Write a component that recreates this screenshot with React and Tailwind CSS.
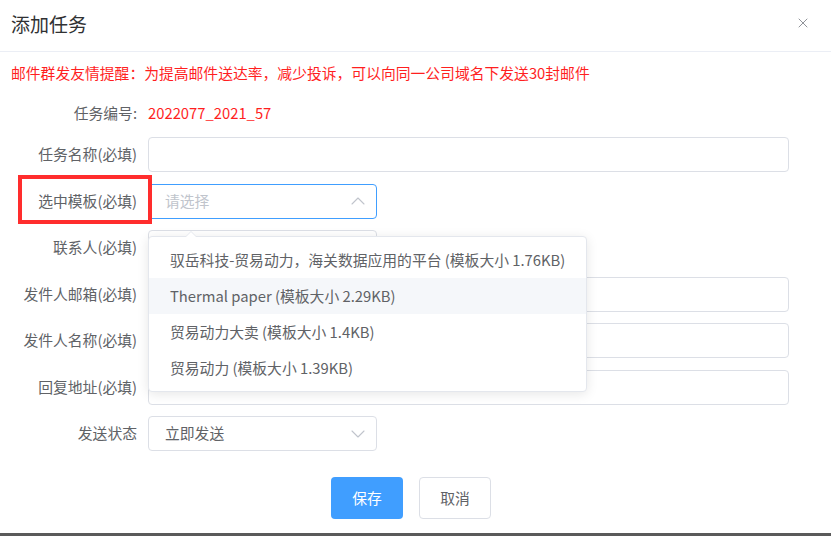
import { ChevronDown, ChevronUp, X } from 'lucide-react'

const FONT = { fontFamily: '"Microsoft YaHei", "Noto Sans CJK SC", "Noto Sans", sans-serif' }

const OPTIONS = [
  '驭岳科技-贸易动力，海关数据应用的平台 (模板大小 1.76KB)',
  'Thermal paper (模板大小 2.29KB)',
  '贸易动力大卖 (模板大小 1.4KB)',
  '贸易动力 (模板大小 1.39KB)',
]

function Row({ label, children }) {
  return (
    <div className="flex h-[35px] items-center">
      <label className="w-[148px] shrink-0 pr-[11px] text-right text-[14.8px] text-[#606266]">{label}</label>
      {children}
    </div>
  )
}

function TextInput() {
  return <div className="h-[35px] w-[641px] rounded-[4px] border border-[#dcdfe6] bg-white" />
}

function Select({ value, placeholder, open }) {
  return (
    <div
      className={
        'flex h-[35px] w-[229px] items-center justify-between rounded-[4px] border bg-white pl-4 pr-[6px] text-[14.8px] ' +
        (open ? 'border-[#409eff]' : 'border-[#dcdfe6]')
      }
    >
      <span className={value ? 'text-[#606266]' : 'text-[#c0c4cc]'}>{value || placeholder}</span>
      {open ? (
        <ChevronUp className="h-6 w-6 text-[#c0c4cc]" strokeWidth={1.1} />
      ) : (
        <ChevronDown className="h-6 w-6 text-[#c0c4cc]" strokeWidth={1.1} />
      )}
    </div>
  )
}

export default function App() {
  return (
    <div className="relative h-[536px] w-[831px] overflow-hidden border-b-[3px] border-[#5a5a5a] bg-white" style={FONT}>
      <div className="flex h-[52px] items-center justify-between border-b border-[#ebeef5] pl-[11px] pr-[20px]">
        <h2 className="pb-[2px] text-[19px] text-[#303133]">添加任务</h2>
        <X className="mb-[6px] h-4 w-4 text-[#909399]" strokeWidth={1.5} />
      </div>

      <p className="mt-[11px] pl-[11px] text-[14.8px] leading-5 text-[#ff1f1f]">
        邮件群发友情提醒：为提高邮件送达率，减少投诉，可以向同一公司域名下发送30封邮件
      </p>

      <div className="mt-[20px] flex h-5 items-center">
        <span className="w-[148px] shrink-0 pr-[11px] text-right text-[14.8px] text-[#606266]">任务编号:</span>
        <span className="text-[14.8px] text-[#ff1f1f]">2022077_2021_57</span>
      </div>

      <div className="mt-[14px] flex flex-col gap-[11.5px]">
        <Row label="任务名称(必填)">
          <TextInput />
        </Row>
        <Row label="选中模板(必填)">
          <Select placeholder="请选择" open />
        </Row>
        <Row label="联系人(必填)">
          <Select placeholder="" />
        </Row>
        <Row label="发件人邮箱(必填)">
          <TextInput />
        </Row>
        <Row label="发件人名称(必填)">
          <TextInput />
        </Row>
        <Row label="回复地址(必填)">
          <TextInput />
        </Row>
        <Row label="发送状态">
          <Select value="立即发送" />
        </Row>
      </div>

      <div className="mt-[26px] flex justify-center gap-4 pr-[9px]">
        <button className="h-[42px] w-[72px] rounded-[4px] bg-[#409eff] text-[14.8px] text-white">保存</button>
        <button className="h-[42px] w-[72px] rounded-[4px] border border-[#dcdfe6] bg-white text-[14.8px] text-[#606266]">
          取消
        </button>
      </div>

      {/* highlight box drawn over the label */}
      <div className="absolute left-[18px] top-[175px] h-[49px] w-[134px] border-[4px] border-[#ff2d2d]" />

      {/* open dropdown */}
      <div className="absolute left-[148px] top-[236px] w-[439px] rounded-[4px] border border-[#e4e7ed] bg-white py-[5px] shadow-[0_2px_12px_rgba(0,0,0,0.1)]">
        <div className="absolute -top-[6px] left-[36px] h-0 w-0 border-x-[6px] border-b-[6px] border-x-transparent border-b-[#e4e7ed]" />
        <div className="absolute -top-[5px] left-[36px] h-0 w-0 border-x-[6px] border-b-[6px] border-x-transparent border-b-white" />
        {OPTIONS.map((o, i) => (
          <div
            key={o}
            className={
              'flex h-[36px] items-center whitespace-nowrap px-[21px] text-[14.8px] text-[#606266] ' +
              (i === 1 ? 'bg-[#f5f7fa]' : '')
            }
          >
            {o}
          </div>
        ))}
      </div>
    </div>
  )
}
